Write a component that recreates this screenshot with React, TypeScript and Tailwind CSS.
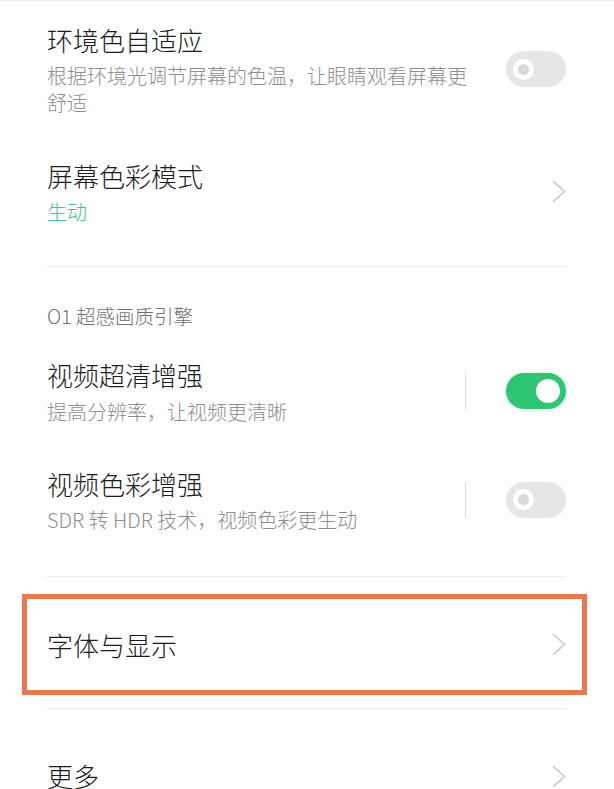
import React from "react";

/* 设置页 — 显示与亮度 子列表 */

function Chevron() {
  return (
    <svg
      width="14"
      height="23"
      viewBox="0 0 14 23"
      fill="none"
      stroke="#c6c6c6"
      strokeWidth="1.6"
      strokeLinecap="round"
      strokeLinejoin="round"
      aria-hidden="true"
    >
      <path d="M1.5 1.5 L12.5 11.5 L1.5 21.5" />
    </svg>
  );
}

function Toggle({ on }: { on: boolean }) {
  return on ? (
    <div className="w-[60px] h-[36px] rounded-full bg-[#2fc673] flex items-center justify-end pr-[6px] shadow-[0_0_6px_rgba(47,198,115,0.25)]">
      <div className="w-[24px] h-[24px] rounded-full bg-white" />
    </div>
  ) : (
    <div className="w-[60px] h-[36px] rounded-full bg-[#e6e6e6] flex items-center pl-[7px]">
      <div className="w-[21px] h-[21px] rounded-full border-[5px] border-white bg-[#d9d9d9]" />
    </div>
  );
}

function SplitToggle({ on }: { on: boolean }) {
  return (
    <div className="flex items-center">
      <div className="w-[1.5px] h-[36px] bg-[#d8d8d8] mr-[40px]" />
      <Toggle on={on} />
    </div>
  );
}

function Divider() {
  return <div className="ml-[47px] mr-[48px] h-px bg-[#ececec]" />;
}

const title = "text-[26px] leading-[36px] text-[#1c1c1c]";
const sub = "text-[20px] leading-[27px] text-[#8e8e8e]";

export default function App() {
  return (
    <div className="w-full min-h-screen bg-white border-t border-[#ececec] font-light font-['Noto_Sans_CJK_SC','Noto_Sans',sans-serif]">
      {/* 环境色自适应 */}
      <div className="flex items-center justify-between pl-[47px] pr-[48px] pt-[21px] pb-[21px]">
        <div className="w-[425px]">
          <p className={title}>环境色自适应</p>
          <p className={`${sub} mt-[4px]`}>
            根据环境光调节屏幕的色温，让眼睛观看屏幕更舒适
          </p>
        </div>
        <Toggle on={false} />
      </div>

      {/* 屏幕色彩模式 */}
      <div className="flex items-center justify-between pl-[47px] pr-[48px] pt-[21px] pb-[41px]">
        <div>
          <p className={title}>屏幕色彩模式</p>
          <p className="text-[20px] leading-[27px] text-[#48c192] mt-[4px]">生动</p>
        </div>
        <Chevron />
      </div>

      <Divider />

      <p className="pl-[47px] pt-[37px] text-[19.5px] leading-[24px] text-[#6e6e6e]">
        O1 超感画质引擎
      </p>

      {/* 视频超清增强 */}
      <div className="flex items-center justify-between pl-[47px] pr-[48px] pt-[29px]">
        <div>
          <p className={title}>视频超清增强</p>
          <p className={`${sub} mt-[5px]`}>提高分辨率，让视频更清晰</p>
        </div>
        <SplitToggle on={true} />
      </div>

      {/* 视频色彩增强 */}
      <div className="flex items-center justify-between pl-[47px] pr-[48px] pt-[41px] pb-[43px]">
        <div>
          <p className={title}>视频色彩增强</p>
          <p className={`${sub} mt-[4px]`}>SDR 转 HDR 技术，视频色彩更生动</p>
        </div>
        <SplitToggle on={false} />
      </div>

      <Divider />

      {/* 字体与显示 (高亮框) */}
      <div className="ml-[22px] mr-[27px] mt-[17px] mb-[13px] h-[101px] border-[5px] border-[#e67a50] flex items-center justify-between pl-[20px] pr-[16px]">
        <p className={title}>字体与显示</p>
        <Chevron />
      </div>

      <Divider />

      {/* 更多 */}
      <div className="flex items-center justify-between pl-[47px] pr-[48px] pt-[49px]">
        <p className={title}>更多</p>
        <Chevron />
      </div>
    </div>
  );
}
